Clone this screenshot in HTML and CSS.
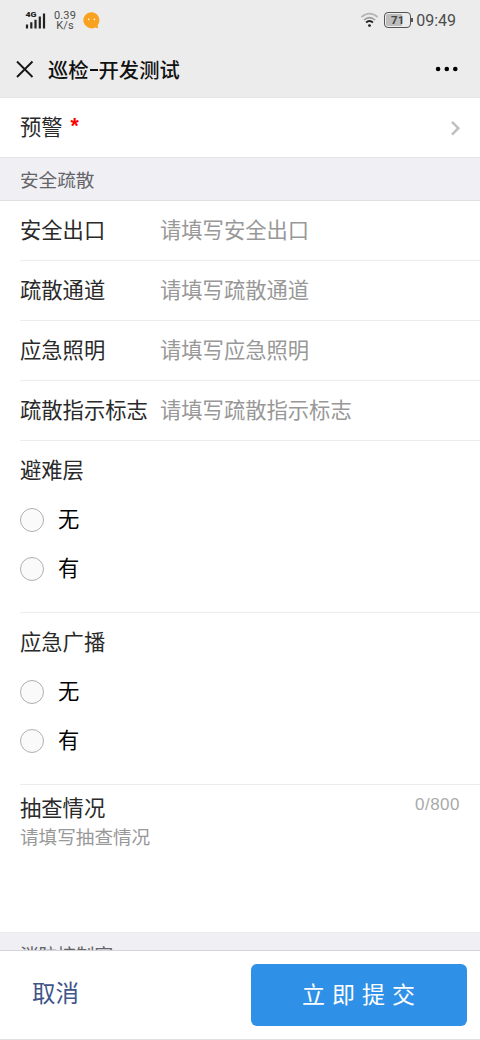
FILE: index.html
```html
<!DOCTYPE html>
<html lang="zh-CN">
<head>
<meta charset="utf-8">
<title>巡检-开发测试</title>
<link rel="stylesheet" href="styles.css">
</head>
<body>
<div class="app">
  <header class="top">
    <div class="status">
      <svg class="signal" width="22" height="20" viewBox="0 0 22 20">
        <text class="net" x="0.5" y="7.3" textLength="11" lengthAdjust="spacingAndGlyphs">4G</text>
        <path d="M2 14.5v4M6.3 12.2v6.3M10.5 9.7v8.8M14.8 6.5v12M19 3.5v15" stroke="#222" stroke-width="2.2"/>
      </svg>
      <div class="speed"><span>0.39</span><span>K/s</span></div>
      <svg class="bubble" width="17" height="17" viewBox="0 0 17 17">
        <path d="M8.3 0.2A8.1 8.1 0 1 0 12 15.6L15.2 16.2 14.6 13.3A8.1 8.1 0 0 0 8.3 0.2Z" fill="#f9a21f"/>
        <circle cx="5.7" cy="7.4" r="0.8" fill="#fff"/><circle cx="11.4" cy="7.4" r="0.8" fill="#fff"/>
      </svg>
      <svg class="wifi" width="19" height="16" viewBox="0 0 19 16" fill="none">
        <path d="M1.3 5.1Q9.5-1.9 17.7 5.1" stroke="#b5b5b5" stroke-width="1.8"/>
        <path d="M3.9 8Q9.5 3.2 15.1 8" stroke="#999" stroke-width="1.6"/>
        <path d="M6.1 10.5Q9.5 7.5 12.9 10.5" stroke="#222" stroke-width="2"/>
        <circle cx="9.5" cy="13.6" r="1.4" fill="#222"/>
      </svg>
      <div class="battery">71</div>
      <div class="clock">09:49</div>
    </div>
    <nav class="nav">
      <svg width="18" height="18" viewBox="0 0 18 18"><path d="M1 1.5L16.5 17M16.5 1.5L1 17" stroke="#161616" stroke-width="1.9"/></svg>
      <h1>巡检<span class="dash"></span>开发测试</h1>
      <svg width="24" height="6" viewBox="0 0 24 6"><circle cx="3.1" cy="3" r="2.3"/><circle cx="11.8" cy="3" r="2.3"/><circle cx="20.3" cy="3" r="2.3"/></svg>
    </nav>
  </header>

  <main class="form">
    <div class="picker">
      <span>预警</span><span class="required">*</span>
      <svg width="12" height="16" viewBox="0 0 12 16"><path d="M2 1.8L8.3 8.2 2 14.6" fill="none" stroke="#c0c0c3" stroke-width="2.5"/></svg>
    </div>
    <div class="section">安全疏散</div>
    <div class="body">
      <div class="field"><label>安全出口</label><span class="hint">请填写安全出口</span></div>
      <div class="field"><label>疏散通道</label><span class="hint">请填写疏散通道</span></div>
      <div class="field"><label>应急照明</label><span class="hint">请填写应急照明</span></div>
      <div class="field"><label>疏散指示标志</label><span class="hint">请填写疏散指示标志</span></div>
      <div class="choices">
        <div class="question">避难层</div>
        <div class="option"><i class="radio"></i><span>无</span></div>
        <div class="option"><i class="radio"></i><span>有</span></div>
      </div>
      <div class="choices">
        <div class="question">应急广播</div>
        <div class="option"><i class="radio"></i><span>无</span></div>
        <div class="option"><i class="radio"></i><span>有</span></div>
      </div>
      <div class="memo">
        <div class="memo-head"><span>抽查情况</span><span class="count">0/800</span></div>
        <div class="memo-hint">请填写抽查情况</div>
      </div>
    </div>
    <div class="section next">消防控制室</div>
  </main>

  <footer class="actions">
    <div class="cancel">取消</div>
    <div class="submit">立即提交</div>
  </footer>
</div>
</body>
</html>
```

FILE: styles.css
```css
* { box-sizing: border-box; }
body {
  margin: 0;
  background: #fff;
  color: #2a2a2a;
  font-family: "Noto Sans CJK SC", sans-serif;
  font-size: 21.3px;
}
svg { display: block; flex: none; }
.app { width: 480px; height: 1040px; display: flex; flex-direction: column; overflow: hidden; }

.top { height: 98px; flex: none; background: #ececec; border-bottom: 1px solid #e6e6e6; }
.status { height: 40px; display: flex; align-items: center; padding: 0 24px 0 25px; font-family: Roboto, sans-serif; color: #4c4c4c; }
.net { font: 900 7.5px Roboto, sans-serif; fill: #222; }
.speed { display: flex; flex-direction: column; align-items: center; width: 24px; margin: 1px 0 0 6px; font-size: 11px; line-height: 10px; letter-spacing: 0.1px; }
.bubble { margin-left: 6px; }
.wifi { margin-left: auto; }
.battery {
  position: relative; width: 27px; height: 16px; margin-left: 5px;
  border: 1.6px solid #555; border-radius: 4px;
  background: linear-gradient(90deg, #bdbdbd 70%, #ececec 70%);
  box-shadow: inset 0 0 0 1px #ececec;
  font-size: 11.5px; font-weight: 700; line-height: 14px; text-align: center; color: #444;
}
.battery::after { content: ""; position: absolute; right: -3px; top: 5px; width: 2px; height: 4px; background: #555; }
.clock { margin: 2px 0 0 5px; font-size: 16px; line-height: 20px; }
.nav { height: 57px; display: flex; align-items: center; padding: 0 21px 0 16px; }
.nav h1 { display: flex; align-items: center; margin: 0 auto 0 14px; font-size: 20.3px; font-weight: 500; line-height: 30px; color: #111; }
.dash { width: 8px; height: 2px; margin: 2px 1px 0; background: #111; }

.form { flex: 1; min-height: 0; overflow: hidden; }
.picker { height: 59px; display: flex; align-items: center; padding: 0 18px 4px 20px; }
.picker svg { margin: 5px 0 0 auto; }
.required { margin-left: 8px; color: #f00; font: 700 21.3px/30px "Liberation Sans", sans-serif; }
.section {
  height: 44px; padding-left: 20px; background: #efeff4; color: #646468;
  border-top: 1px solid #e5e5e8; border-bottom: 1px solid #e0e0e3;
  font-size: 18.6px; line-height: 41px;
}
.body { padding-left: 20px; }
.field { height: 60px; display: flex; align-items: center; padding-bottom: 5px; border-bottom: 1px solid #ececec; white-space: nowrap; }
.field label { width: 140px; }
.hint { color: #989898; }
.choices { height: 172px; padding-top: 12px; border-bottom: 1px solid #ececec; }
.question { height: 32px; line-height: 32px; margin-bottom: 10px; }
.option { height: 49px; display: flex; align-items: center; color: #000; }
.option span { margin: -5px 0 0 14px; }
.radio { width: 24px; height: 24px; border: 1.5px solid #b0b0b0; border-radius: 50%; background: #fafafa; }
.memo { height: 147px; padding: 7px 20px 0 0; }
.memo-head { height: 30px; display: flex; justify-content: space-between; line-height: 30px; }
.count { color: #aaa; font: 17px/25px "Liberation Sans", sans-serif; letter-spacing: 0.5px; }
.memo-hint { color: #989898; font-size: 18.6px; line-height: 28px; }
.next { border-bottom: 0; border-top-color: #eaeaef; }

.actions { height: 90px; flex: none; display: flex; border-top: 1px solid #d4d4d8; border-bottom: 1px solid #e0e0e0; padding: 13px 13px 0 32px; justify-content: space-between; }
.cancel { color: #41558a; font-size: 23.5px; line-height: 56px; }
.submit { width: 216px; height: 62px; border-radius: 6px; background: #2f90e8; color: #fff; font-size: 23px; line-height: 58px; text-align: center; letter-spacing: 7px; padding-left: 6px; }
```
